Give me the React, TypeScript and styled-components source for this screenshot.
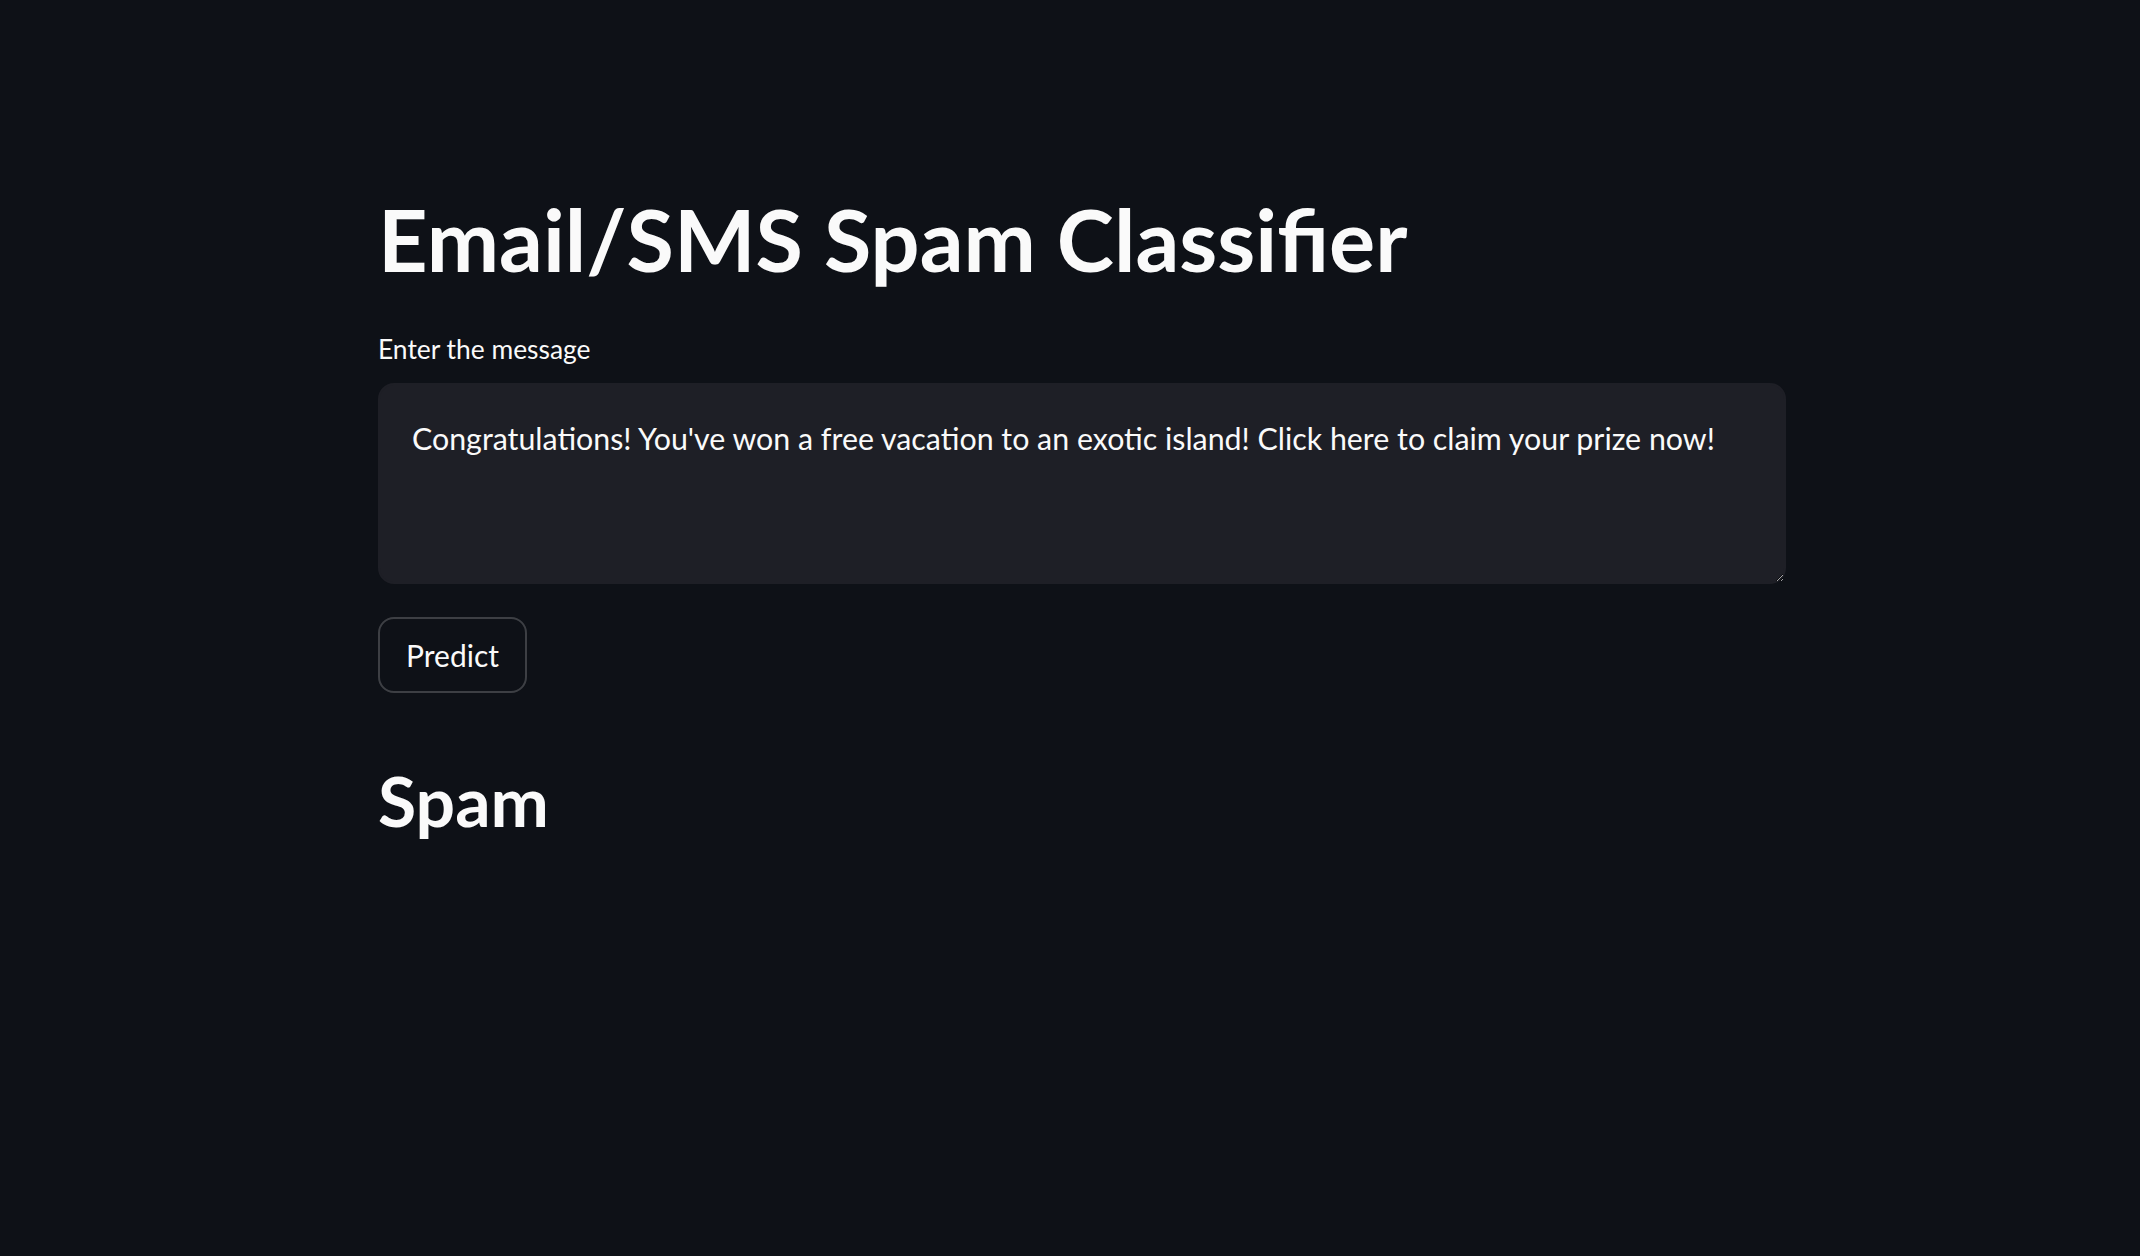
import React from "react";
import styled, { createGlobalStyle } from "styled-components";

const GlobalStyle = createGlobalStyle`
  html, body {
    margin: 0;
    padding: 0;
    background: #0e1117;
    color: #fafafa;
    font-family: "Lato", "Noto Sans", sans-serif;
    color-scheme: dark;
  }
  #root { min-height: 1256px; }
`;

const Page = styled.main`
  min-height: 1256px;
  box-sizing: border-box;
  padding: 187px 354px 0 378px;
  display: flex;
  flex-direction: column;
  align-items: flex-start;
`;

const Title = styled.h1`
  margin: 0;
  font-size: 86.4px;
  line-height: 1.2;
  font-weight: 700;
  color: #fafafa;
`;

const Field = styled.div`
  margin-top: 43px;
  width: 100%;
  display: flex;
  flex-direction: column;
  gap: 18px;
`;

const Label = styled.label`
  font-size: 26.4px;
  line-height: 1.2;
  font-weight: 400;
  color: #fafafa;
`;

const TextArea = styled.textarea`
  box-sizing: border-box;
  width: 100%;
  height: 201px;
  margin: 0;
  padding: 32px 32px;
  border: 2px solid #1e1f26;
  border-radius: 16px;
  background: #1e1f26;
  color: #fafafa;
  font-family: "Lato", "Noto Sans", sans-serif;
  font-size: 30.35px;
  line-height: 1.4;
  resize: vertical;
  outline: none;
`;

const Button = styled.button`
  margin-top: 33px;
  box-sizing: border-box;
  height: 76px;
  padding: 0 26px;
  border: 2px solid rgba(250, 250, 250, 0.2);
  border-radius: 16px;
  background: transparent;
  color: #fafafa;
  font-family: "Lato", "Noto Sans", sans-serif;
  font-size: 30px;
  line-height: 1.2;
  cursor: pointer;
`;

const Result = styled.h2`
  margin: 66px 0 0;
  font-size: 69.7px;
  line-height: 1.2;
  font-weight: 700;
  color: #fafafa;
`;

export default function App() {
  return (
    <>
      <GlobalStyle />
      <Page>
        <Title>Email/SMS Spam Classifier</Title>
        <Field>
          <Label htmlFor="msg">Enter the message</Label>
          <TextArea
            id="msg"
            defaultValue="Congratulations! You've won a free vacation to an exotic island! Click here to claim your prize now!"
          />
        </Field>
        <Button type="button">Predict</Button>
        <Result>Spam</Result>
      </Page>
    </>
  );
}
